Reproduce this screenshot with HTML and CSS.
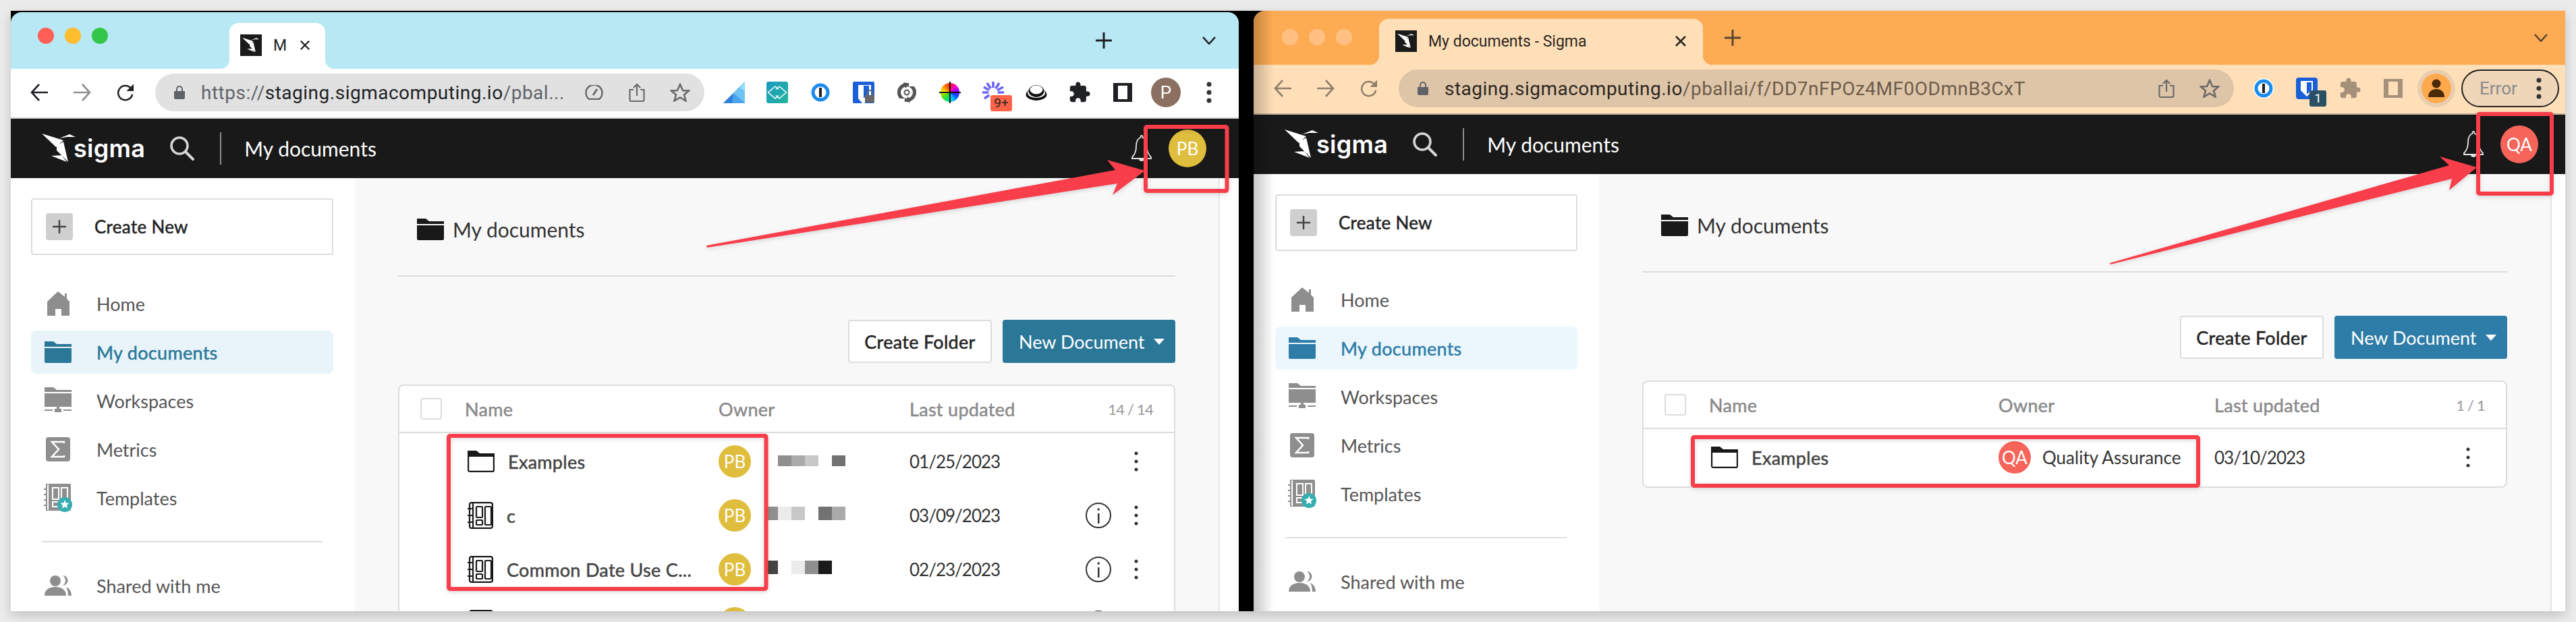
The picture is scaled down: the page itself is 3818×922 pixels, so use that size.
FILE: index.html
```html
<!DOCTYPE html>
<html lang="en">
<head>
<meta charset="utf-8">
<title>My documents - Sigma</title>
<link rel="stylesheet" href="styles.css">
</head>
<body>
<svg class="defs" aria-hidden="true">
  <defs>
    <linearGradient id="teal" x1="0" y1="0" x2="1" y2="1"><stop offset="0" stop-color="#1b9ac2"/><stop offset="1" stop-color="#22b69a"/></linearGradient>
    <symbol id="bird" viewBox="0 0 51 44"><path fill="currentColor" d="M0 0L32 10L21 20ZM22 18L32 12L39 42L22 25ZM14 33L29 32L37 42ZM26 7L41 1L50 5L37 5Z"/></symbol>
    <symbol id="search" viewBox="0 0 36 36"><circle cx="14" cy="14" r="12" fill="none" stroke="currentColor" stroke-width="3.5"/><path d="M23 23L34 34" stroke="currentColor" stroke-width="4" stroke-linecap="round"/></symbol>
    <symbol id="bell" viewBox="0 0 32 40"><path fill="none" stroke="currentColor" stroke-width="1.8" d="M16 1c-1 0-1.6 1-1.6 3C9 6 8 11 8 17c0 7-2 12-6 16v2h28v-2c-4-4-6-9-6-16 0-6-1-11-6.400-13 0-2-.6-3-1.600-3z"/><path fill="currentColor" d="M12 35h8c0 3-2 4-4 4s-4-1-4-4z"/></symbol>
    <symbol id="folder" viewBox="0 0 40 32"><path fill="currentColor" d="M0 0h13l5 4h22v4H0zM0 10h40v20a2 2 0 0 1-2 2H2a2 2 0 0 1-2-2z"/></symbol>
    <symbol id="folder-line" viewBox="0 0 40 32"><path fill="currentColor" d="M0 0h13l5 4h22v5H0z"/><path fill="none" stroke="currentColor" stroke-width="2.200" d="M1.100 6v22.900a2 2 0 0 0 2 2h33.800a2 2 0 0 0 2-2V6"/></symbol>
    <symbol id="home" viewBox="0 0 33 36"><path fill="currentColor" d="M16 0L0 15V36H12V26H21V36H33V15L29 11V3H26V8Z"/></symbol>
    <symbol id="workspace" viewBox="0 0 40 40"><path fill="currentColor" d="M0 0h13l5 4h22v3H0zM0 9h40v20H0zM18 29h4v3h3v5h-3v0h-4v0h-3v-5h3zM0 33h12v2H0zM28 33h12v2H28z"/></symbol>
    <symbol id="metrics" viewBox="0 0 36 36"><rect width="36" height="36" rx="4" fill="currentColor"/><path fill="none" stroke="#fff" stroke-width="2.500" d="M27 9V7H9l10 11L9 29h18v-2"/></symbol>
    <symbol id="templates" viewBox="0 0 42 42"><path fill="currentColor" d="M3 0h35a2 2 0 0 1 2 2v36a2 2 0 0 1-2 2H3z"/><path stroke="currentColor" stroke-width="2" d="M0 8h3M0 16h3M0 24h3M0 32h3"/><path fill="none" stroke="#fff" stroke-width="2" d="M6 1v38M13 6h9v17h-9zM13 27h9v7h-9zM26 6h9v28h-9z"/><circle cx="31" cy="31" r="11" fill="#35aeb0"/><polygon transform="translate(31 31)" fill="#fff" points="0,-7 1.800,-2.400 6.700,-2.200 2.900,.9 4.100,5.700 0,3 -4.100,5.700 -2.900,.9 -6.700,-2.200 -1.800,-2.400"/></symbol>
    <symbol id="shared" viewBox="0 0 40 30"><path fill="currentColor" d="M27 0a7.500 7.500 0 0 1 0 15c2.500-2 4-4.500 4-7.500S29.500 2 27 0zM32 17c5 2 8 7 8 13h-5c0-5-1-9-3-13z"/><circle cx="16" cy="8" r="8" fill="currentColor"/><path fill="currentColor" d="M0 30c0-8 6-13 16-13s16 5 16 13z"/></symbol>
    <symbol id="workbook" viewBox="0 0 38 40"><g fill="none" stroke="currentColor" stroke-width="2.200"><rect x="3" y="1.100" width="33.900" height="37.800" rx="3"/><path d="M8 1v38M0 10h7M0 20h7M0 30h7"/><rect x="13" y="7" width="9" height="16" rx="1"/><rect x="13" y="27" width="9" height="7" rx="1"/><rect x="26" y="7" width="9" height="27" rx="1"/></g></symbol>
    <symbol id="info" viewBox="0 0 38 40"><circle cx="19" cy="20" r="18" fill="none" stroke="currentColor" stroke-width="2"/><rect x="18" y="17" width="2.500" height="15" fill="currentColor"/><circle cx="19.200" cy="11" r="1.800" fill="currentColor"/></symbol>
    <symbol id="kebab" viewBox="0 0 8 32"><circle cx="4" cy="4" r="2.500" fill="currentColor"/><circle cx="4" cy="16" r="2.500" fill="currentColor"/><circle cx="4" cy="28" r="2.500" fill="currentColor"/></symbol>
    <symbol id="kebab-bold" viewBox="0 0 8 32"><circle cx="4" cy="4" r="3.500" fill="currentColor"/><circle cx="4" cy="16" r="3.500" fill="currentColor"/><circle cx="4" cy="28" r="3.500" fill="currentColor"/></symbol>
    <symbol id="back" viewBox="0 0 26 26"><path fill="none" stroke="currentColor" stroke-width="2.600" d="M26 13H2M13 1L2 13L13 25"/></symbol>
    <symbol id="forward" viewBox="0 0 26 26"><path fill="none" stroke="currentColor" stroke-width="2.600" d="M0 13H24M13 1L24 13L13 25"/></symbol>
    <symbol id="reload" viewBox="0 0 27 26"><path fill="none" stroke="currentColor" stroke-width="2.600" d="M22 7A11 11 0 1 0 24 16"/><path fill="currentColor" d="M26 0V11H15Z"/></symbol>
    <symbol id="lock" viewBox="0 0 16 20"><path fill="currentColor" d="M0 8h16v10a2 2 0 0 1-2 2H2a2 2 0 0 1-2-2z"/><path fill="none" stroke="currentColor" stroke-width="2" d="M4 9V5a4 4 0 0 1 8 0v4"/></symbol>
    <symbol id="gauge" viewBox="0 0 27 22"><path fill="none" stroke="currentColor" stroke-width="2.500" d="M6 21a12 12 0 1 1 15 0z"/><path stroke="currentColor" stroke-width="3" d="M12 15L18 6"/></symbol>
    <symbol id="share" viewBox="0 0 24 28"><path fill="none" stroke="currentColor" stroke-width="2.200" d="M7 10H1.500v15a2 2 0 0 0 2 2h17a2 2 0 0 0 2-2V10H17M12 19V2M7 7l5-5 5 5"/></symbol>
    <symbol id="star" viewBox="0 0 30 28"><polygon fill="none" stroke="currentColor" stroke-width="2.600" points="15,2 19,11 28,11.500 21,17.500 23.500,26.500 15,21.500 6.500,26.500 9,17.500 2,11.500 11,11"/></symbol>
    <symbol id="close" viewBox="0 0 18 18"><path fill="none" stroke="currentColor" stroke-width="2.600" d="M2 2l14 14M16 2L2 16"/></symbol>
    <symbol id="plus" viewBox="0 0 24 24"><path fill="none" stroke="currentColor" stroke-width="3" stroke-linecap="round" d="M12 1v22M1 12h22"/></symbol>
    <symbol id="chevron" viewBox="0 0 20 12"><path fill="none" stroke="currentColor" stroke-width="2.600" d="M1 1l9 10 9-10"/></symbol>
    <symbol id="onepass" viewBox="0 0 30 30"><circle cx="15" cy="15" r="15" fill="#fff"/><circle cx="15" cy="15" r="11" fill="none" stroke="#1a8cf0" stroke-width="5"/><rect x="13" y="8" width="4" height="14" fill="#222"/></symbol>
    <symbol id="puzzle" viewBox="0 0 24 24"><path fill="currentColor" d="M20.500 11H19V7c0-1.100-.9-2-2-2h-4V3.500C13 2.120 11.880 1 10.500 1S8 2.120 8 3.500V5H4c-1.100 0-1.990.9-1.990 2v3.800H3.500c1.490 0 2.700 1.210 2.700 2.700s-1.210 2.700-2.700 2.700H2V20c0 1.100.9 2 2 2h3.800v-1.500c0-1.490 1.210-2.700 2.700-2.700 1.490 0 2.700 1.210 2.700 2.700V22H17c1.100 0 2-.9 2-2v-4h1.500c1.380 0 2.500-1.120 2.500-2.500S21.880 11 20.500 11z"/></symbol>
    <symbol id="panel" viewBox="0 0 28 28"><path fill="currentColor" fill-rule="evenodd" d="M0 0h28v28H0zM7 4v20h14V4z"/></symbol>
    <symbol id="shield" viewBox="0 0 32 32"><rect width="32" height="32" rx="2" fill="#1a5fd8"/><path fill="#fff" d="M8 5h19v15l-10 12H14L8 25zM16 7v17l6-3V7z"/><path fill="#1a5fd8" d="M16 6h8v15l-8 3z"/><rect x="18" y="20" width="14" height="11" rx="1.500" fill="#666"/><path fill="none" stroke="#666" stroke-width="2" d="M21 20v-3a4 4 0 0 1 8 0v3"/></symbol>
  </defs>
</svg>

<main class="desktop">
  <section class="window win-a">
    <header class="tabbar">
      <div class="lights"><i class="light red"></i><i class="light amber"></i><i class="light green"></i></div>
      <div class="tab">
        <span class="favicon"><svg class="ico-fav"><use href="#bird"/></svg></span>
        <span class="tab-title">M</span>
        <svg class="ico-close"><use href="#close"/></svg>
      </div>
      <svg class="ico-plus"><use href="#plus"/></svg>
      <svg class="ico-chev"><use href="#chevron"/></svg>
    </header>
    <nav class="toolbar">
      <span class="tool"><svg class="ico-nav"><use href="#back"/></svg></span>
      <span class="tool dim"><svg class="ico-nav"><use href="#forward"/></svg></span>
      <span class="tool"><svg class="ico-nav"><use href="#reload"/></svg></span>
      <div class="pill">
        <svg class="ico-lock"><use href="#lock"/></svg>
        <span class="url"><span class="url-dim">https://</span>staging.sigmacomputing.io<span class="url-dim">/pbal...</span></span>
        <div class="pill-actions">
          <span class="tool"><svg class="ico-gauge"><use href="#gauge"/></svg></span>
          <span class="tool"><svg class="ico-share"><use href="#share"/></svg></span>
          <span class="tool"><svg class="ico-star"><use href="#star"/></svg></span>
        </div>
      </div>
      <div class="extensions">
        <span class="tool"><svg class="ico-32" viewBox="0 0 32 32"><polygon points="32,0 32,32 0,32" fill="#3b8fe6"/><polygon points="32,0 32,15 24,9" fill="#8fe0fb"/><polygon points="32,15 24,9 15,17 32,32" fill="#6fc4f5"/><polygon points="15,17 0,32 13,32" fill="#2f7fdc"/><polygon points="15,17 13,32 32,32" fill="#4ea4ec"/></svg></span>
        <span class="tool"><svg class="ico-32" viewBox="0 0 32 32"><rect width="32" height="32" rx="3" fill="url(#teal)"/><path fill="none" stroke="#fff" stroke-width="1.500" d="M13 7L2.500 16 13 25l5-4.500M19 7L29.500 16 19 25l-5-4.500M18 11.500L13 7M14 11.500L19 7"/></svg></span>
        <span class="tool"><svg class="ico-30"><use href="#onepass"/></svg></span>
        <span class="tool"><svg class="ico-32"><use href="#shield"/></svg></span>
        <span class="tool"><svg class="ico-32" viewBox="0 0 32 32"><circle cx="16" cy="16" r="11.500" fill="none" stroke="#555" stroke-width="5"/><circle cx="16" cy="16" r="3.500" fill="none" stroke="#555" stroke-width="2"/><path fill="#fff" d="M19 0h8v7h-8zM5 25h8v7H5z"/><path fill="#555" d="M11 1l9 2-6 7zM21 31l-9-2 6-7z"/></svg></span>
        <span class="tool"><span class="wheel"></span></span>
        <span class="tool"><span class="burst"><svg class="ico-32" viewBox="0 0 32 32"><g stroke="#6a63f6" stroke-width="3.600"><path d="M16 16V0M16 16L7 2M16 16L25 2M16 16L2 8M16 16L31 8M16 16H0M16 16H32M16 16L3 25"/></g><circle cx="16" cy="16" r="7" fill="#fff"/></svg><span class="badge-orange">9+</span></span></span>
        <span class="tool"><svg class="ico-32" viewBox="0 0 32 24"><ellipse cx="16" cy="15" rx="15.500" ry="9" fill="#111"/><ellipse cx="16" cy="13" rx="13" ry="7" fill="#fff"/><ellipse cx="16" cy="10" rx="11.500" ry="9" fill="#111"/><ellipse cx="16" cy="8" rx="9.500" ry="6.500" fill="#fff"/></svg></span>
        <span class="tool"><svg class="ico-puzzle"><use href="#puzzle"/></svg></span>
        <span class="tool"><svg class="ico-panel"><use href="#panel"/></svg></span>
        <span class="tool"><span class="chrome-avatar">P</span></span>
        <span class="tool"><svg class="ico-kebab-b"><use href="#kebab-bold"/></svg></span>
      </div>
    </nav>
    <header class="appbar">
      <svg class="ico-logo"><use href="#bird"/></svg>
      <span class="wordmark">sigma</span>
      <svg class="ico-search"><use href="#search"/></svg>
      <i class="app-divider"></i>
      <span class="app-title">My documents</span>
      <div class="app-right">
        <svg class="ico-bell"><use href="#bell"/></svg>
        <span class="avatar avatar-lg gold">PB</span>
      </div>
    </header>
    <div class="content">
      <aside class="sidebar">
        <button class="create-new"><span class="plus-box"><svg class="ico-plus-sm"><use href="#plus"/></svg></span>Create New</button>
        <ul class="nav">
          <li class="nav-item"><span class="nav-icon"><svg class="i-home"><use href="#home"/></svg></span>Home</li>
          <li class="nav-item active"><span class="nav-icon"><svg class="i-folder"><use href="#folder"/></svg></span>My documents</li>
          <li class="nav-item"><span class="nav-icon"><svg class="i-work"><use href="#workspace"/></svg></span>Workspaces</li>
          <li class="nav-item"><span class="nav-icon"><svg class="i-metrics"><use href="#metrics"/></svg></span>Metrics</li>
          <li class="nav-item"><span class="nav-icon"><svg class="i-templates"><use href="#templates"/></svg></span>Templates</li>
        </ul>
        <hr class="side-rule">
        <div class="nav-item"><span class="nav-icon"><svg class="i-shared"><use href="#shared"/></svg></span>Shared with me</div>
      </aside>
      <div class="main">
        <h1 class="page-title"><svg class="i-folder"><use href="#folder"/></svg>My documents</h1>
        <hr class="page-rule">
        <div class="actions">
          <button class="btn btn-plain">Create Folder</button>
          <button class="btn btn-primary">New Document<i class="caret"></i></button>
        </div>
        <div class="table">
          <div class="thead">
            <div class="th-name"><i class="checkbox"></i>Name</div>
            <div>Owner</div>
            <div>Last updated</div>
            <div class="count">14 / 14</div>
          </div>
          <div class="tbody">
            <div class="row">
              <div class="cell-name"><svg class="i-rowfolder"><use href="#folder-line"/></svg>Examples</div>
              <div class="cell-owner"><span class="avatar gold">PB</span><span class="redacted short"><i class="s0"></i><i class="s3"></i><i class="s4"></i><i class="s5"></i><i class="s0"></i><i class="s2"></i></span></div>
              <div class="cell-date">01/25/2023</div>
              <div class="cell-act"><svg class="i-kebab"><use href="#kebab"/></svg></div>
            </div>
            <div class="row">
              <div class="cell-name"><svg class="i-workbook"><use href="#workbook"/></svg>c</div>
              <div class="cell-owner"><span class="avatar gold">PB</span><span class="redacted"><i class="s3"></i><i class="s6"></i><i class="s5"></i><i class="s0"></i><i class="s2"></i><i class="s4"></i></span></div>
              <div class="cell-date">03/09/2023</div>
              <div class="cell-act"><svg class="i-info"><use href="#info"/></svg><svg class="i-kebab"><use href="#kebab"/></svg></div>
            </div>
            <div class="row">
              <div class="cell-name"><svg class="i-workbook"><use href="#workbook"/></svg>Common Date Use C...</div>
              <div class="cell-owner"><span class="avatar gold">PB</span><span class="redacted"><i class="s1"></i><i class="s0"></i><i class="s6"></i><i class="s3"></i><i class="s7"></i><i class="s0"></i></span></div>
              <div class="cell-date">02/23/2023</div>
              <div class="cell-act"><svg class="i-info"><use href="#info"/></svg><svg class="i-kebab"><use href="#kebab"/></svg></div>
            </div>
            <div class="row">
              <div class="cell-name"><svg class="i-workbook"><use href="#workbook"/></svg></div>
              <div class="cell-owner"><span class="avatar gold"></span></div>
              <div class="cell-date"></div>
              <div class="cell-act"><svg class="i-info"><use href="#info"/></svg><svg class="i-kebab"><use href="#kebab"/></svg></div>
            </div>
          </div>
        </div>
      </div>
      <div class="gutter-strip"></div>
    </div>
  </section>

  <section class="window win-b">
    <header class="tabbar">
      <div class="lights"><i class="light pale"></i><i class="light pale"></i><i class="light pale"></i></div>
      <div class="tab">
        <span class="favicon"><svg class="ico-fav"><use href="#bird"/></svg></span>
        <span class="tab-title">My documents - Sigma</span>
        <svg class="ico-close"><use href="#close"/></svg>
      </div>
      <svg class="ico-plus"><use href="#plus"/></svg>
      <svg class="ico-chev"><use href="#chevron"/></svg>
    </header>
    <nav class="toolbar">
      <span class="tool dim"><svg class="ico-nav"><use href="#back"/></svg></span>
      <span class="tool dim"><svg class="ico-nav"><use href="#forward"/></svg></span>
      <span class="tool dim"><svg class="ico-nav"><use href="#reload"/></svg></span>
      <div class="pill">
        <svg class="ico-lock"><use href="#lock"/></svg>
        <span class="url">staging.sigmacomputing.io<span class="url-dim">/pballai/f/DD7nFPOz4MF0ODmnB3CxT</span></span>
        <div class="pill-actions">
          <span class="tool"><svg class="ico-share"><use href="#share"/></svg></span>
          <span class="tool"><svg class="ico-star"><use href="#star"/></svg></span>
        </div>
      </div>
      <div class="extensions">
        <span class="tool"><svg class="ico-30"><use href="#onepass"/></svg></span>
        <span class="tool"><span class="bitwarden"><svg class="ico-bw" viewBox="0 0 32 32"><rect width="32" height="32" rx="4" fill="#1a5fd8"/><path fill="#fff" d="M7 5h18v14l-9 9-9-9z"/><path fill="#1a5fd8" d="M16 7h7v11l-7 7z"/></svg><span class="badge-slate">1</span></span></span>
        <span class="tool faded"><svg class="ico-puzzle"><use href="#puzzle"/></svg></span>
        <span class="tool faded"><svg class="ico-panel"><use href="#panel"/></svg></span>
        <span class="tool"><span class="guest"><svg class="ico-guest" viewBox="0 0 44 44"><circle cx="22" cy="22" r="22" fill="#ffa94d"/><circle cx="22" cy="15" r="6.500" fill="#4a2a08"/><path fill="#4a2a08" d="M10 35c0-8 5-12 12-12s12 4 12 12z"/></svg></span></span>
        <span class="error-pill">Error<svg class="ico-kebab-b"><use href="#kebab-bold"/></svg></span>
      </div>
    </nav>
    <header class="appbar">
      <svg class="ico-logo"><use href="#bird"/></svg>
      <span class="wordmark">sigma</span>
      <svg class="ico-search"><use href="#search"/></svg>
      <i class="app-divider"></i>
      <span class="app-title">My documents</span>
      <div class="app-right">
        <svg class="ico-bell"><use href="#bell"/></svg>
        <span class="avatar avatar-lg coral">QA</span>
      </div>
    </header>
    <div class="content">
      <aside class="sidebar">
        <button class="create-new"><span class="plus-box"><svg class="ico-plus-sm"><use href="#plus"/></svg></span>Create New</button>
        <ul class="nav">
          <li class="nav-item"><span class="nav-icon"><svg class="i-home"><use href="#home"/></svg></span>Home</li>
          <li class="nav-item active"><span class="nav-icon"><svg class="i-folder"><use href="#folder"/></svg></span>My documents</li>
          <li class="nav-item"><span class="nav-icon"><svg class="i-work"><use href="#workspace"/></svg></span>Workspaces</li>
          <li class="nav-item"><span class="nav-icon"><svg class="i-metrics"><use href="#metrics"/></svg></span>Metrics</li>
          <li class="nav-item"><span class="nav-icon"><svg class="i-templates"><use href="#templates"/></svg></span>Templates</li>
        </ul>
        <hr class="side-rule">
        <div class="nav-item"><span class="nav-icon"><svg class="i-shared"><use href="#shared"/></svg></span>Shared with me</div>
      </aside>
      <div class="main">
        <h1 class="page-title"><svg class="i-folder"><use href="#folder"/></svg>My documents</h1>
        <hr class="page-rule">
        <div class="actions">
          <button class="btn btn-plain">Create Folder</button>
          <button class="btn btn-primary">New Document<i class="caret"></i></button>
        </div>
        <div class="table">
          <div class="thead">
            <div class="th-name"><i class="checkbox"></i>Name</div>
            <div>Owner</div>
            <div>Last updated</div>
            <div class="count">1 / 1</div>
          </div>
          <div class="tbody">
            <div class="row">
              <div class="cell-name"><svg class="i-rowfolder"><use href="#folder-line"/></svg>Examples</div>
              <div class="cell-owner"><span class="avatar coral">QA</span><span class="owner-name">Quality Assurance</span></div>
              <div class="cell-date">03/10/2023</div>
              <div class="cell-act"><svg class="i-kebab"><use href="#kebab"/></svg></div>
            </div>
          </div>
        </div>
      </div>
      <div class="gutter-strip"></div>
    </div>
  </section>
</main>

<svg class="annotations" viewBox="0 0 3818 922" aria-hidden="true">
  <g class="marks">
    <rect x="1698" y="188" width="120.500" height="95" rx="2"/>
    <rect x="665" y="646" width="470.500" height="227" rx="2"/>
    <rect x="3673" y="169" width="109" height="118" rx="2"/>
    <rect x="2509" y="648" width="749" height="72" rx="2"/>
  </g>
  <polygon class="arrow" points="1047,364 1653,252 1641,237 1697,253 1649,289 1656,272 1048,367"/>
  <polygon class="arrow" points="3127,390 3630,245 3616,232 3671,248 3630,282 3634,265 3128,392"/>
</svg>
</body>
</html>
```
FILE: styles.css
```css
* { box-sizing: border-box; }

html, body { margin: 0; height: 100%; }

body {
  width: 3818px;
  height: 922px;
  padding: 16px 0 0 16px;
  overflow: hidden;
  background: #ebebeb;
  font-family: Lato, "Open Sans", sans-serif;
  font-size: 27px;
  color: #333;
}

i { display: block; font-style: normal; }
svg { display: block; flex: none; }

.defs { position: absolute; width: 0; height: 0; }

.desktop {
  display: flex;
  gap: 22px;
  width: 3786px;
  height: 890px;
  background: #000;
  box-shadow: 0 6px 16px rgba(0, 0, 0, .18);
}

.window {
  position: relative;
  display: flex;
  flex-direction: column;
  overflow: hidden;
}

.win-a {
  --tabbar-bg: #b8e8f4;
  --tab-bg: #fff;
  --toolbar-line: #d2d2d2;
  --pill-bg: #e1e1e1;
  --ink: #202124;
  --ink-dim: #5f6368;
  --accent: #2b7798;
  --accent-soft: #e8f4f9;
  --lights-left: 40px;
  --tab-gap: 180px;
  --name-col: 473px;
  --owner-col: 283px;
  --sidebar-w: 510px;
  --sidebar-pad: 30px;
  --strip-w: 28px;
  --tabbar-h: 84px;
  width: 1820px;
  margin-top: 2px;
  border-radius: 16px 16px 0 0;
}

.win-b {
  --tabbar-bg: #feac54;
  --tab-bg: #ffdfb8;
  --toolbar-line: #c8b59e;
  --pill-bg: #dfc5a7;
  --ink: #2a2621;
  --ink-dim: #6b5c4d;
  --accent: #2e7da8;
  --accent-soft: #ecf7fd;
  --lights-left: 42px;
  --tab-gap: 40px;
  --name-col: 526px;
  --owner-col: 320px;
  --sidebar-w: 512px;
  --sidebar-pad: 32px;
  --strip-w: 20px;
  --tabbar-h: 80px;
  width: 1944px;
  border-radius: 16px 0 0 0;
}

/* soft shadow the left window throws on the right one */
.win-b::after {
  content: "";
  position: absolute;
  inset: 0 auto 0 0;
  width: 30px;
  background: linear-gradient(90deg, rgba(0, 0, 0, .22), rgba(0, 0, 0, 0));
}

/* ---------- tab strip ---------- */
.tabbar {
  display: flex;
  align-items: center;
  flex: none;
  height: var(--tabbar-h);
  padding-left: var(--lights-left);
  background: var(--tabbar-bg);
}

.lights { display: flex; gap: 16px; margin-bottom: 14px; }
.win-b .lights { margin-bottom: 2px; margin-left: 0; }
.light { width: 24px; height: 24px; border-radius: 50%; }
.red { background: #ff5f57; }
.amber { background: #febc2e; }
.green { background: #32c748; }
.pale { background: #ffc082; }

.tab {
  position: relative;
  display: flex;
  align-items: center;
  align-self: flex-end;
  width: 142px;
  height: 68px;
  margin-left: var(--tab-gap);
  padding: 0 16px 2px;
  border-radius: 14px 14px 0 0;
  background: var(--tab-bg);
  font: 400 23px Roboto, sans-serif;
  color: var(--ink);
}

.win-b .tab { width: 480px; padding: 0 24px 2px; }

.tab::before,
.tab::after {
  content: "";
  position: absolute;
  bottom: 0;
  width: 14px;
  height: 14px;
}
.tab::before { left: -14px; background: radial-gradient(circle at 0 0, transparent 14px, var(--tab-bg) 14.500px); }
.tab::after { right: -14px; background: radial-gradient(circle at 100% 0, transparent 14px, var(--tab-bg) 14.500px); }

.favicon {
  display: flex;
  align-items: center;
  justify-content: center;
  width: 32px;
  height: 32px;
  background: #1a1a1a;
  color: #fff;
}
.ico-fav { width: 26px; height: 26px; }

.tab-title { margin-left: 17px; white-space: nowrap; }
.ico-close { width: 16px; height: 16px; margin-left: 19px; }
.win-b .ico-close { width: 18px; height: 18px; margin-left: auto; }

.ico-plus { width: 24px; height: 24px; margin-left: 1142px; color: #202124; }
.win-b .ico-plus { margin-left: 32px; color: #5a4630; }
.ico-chev { width: 20px; height: 12px; margin-left: 134px; color: #202124; }
.win-b .ico-chev { margin-left: 1176px; color: #5a4630; }

/* ---------- toolbar ---------- */
.toolbar {
  display: flex;
  align-items: center;
  flex: none;
  height: 74px;
  padding: 0 0 2px 10px;
  border-bottom: 2px solid var(--toolbar-line);
  background: var(--tab-bg);
  color: var(--ink);
}
.win-b .toolbar { padding-left: 11px; }

.tool {
  display: flex;
  align-items: center;
  justify-content: center;
  flex: none;
  width: 64px;
  height: 56px;
  color: var(--ink);
}
.tool.dim { color: #8e8e8e; }
.win-b .tool.dim { color: #8f7e6c; }
.tool.faded { color: #a5917a; }

.ico-nav { width: 26px; height: 26px; }

.pill {
  display: flex;
  align-items: center;
  flex: none;
  width: 814px;
  height: 56px;
  margin-left: 12px;
  padding: 0 4px 0 28px;
  border-radius: 28px;
  background: var(--pill-bg);
}
.win-b .pill { width: 1238px; }

.ico-lock { width: 16px; height: 20px; color: #5f6368; }
.url { margin-left: 24px; font: 400 28px Roboto, sans-serif; letter-spacing: .5px; color: var(--ink); white-space: nowrap; }
.url-dim { color: var(--ink-dim); }

.pill-actions { display: flex; margin-left: auto; }
.pill-actions .tool { color: #6a6a6a; }
.ico-gauge { width: 27px; height: 22px; }
.ico-share { width: 24px; height: 28px; }
.ico-star { width: 30px; height: 28px; }

.extensions { display: flex; align-items: center; margin-left: 12px; }
.ico-32 { width: 32px; height: 32px; }
.ico-30 { width: 30px; height: 30px; }
.ico-puzzle { width: 34px; height: 34px; }
.ico-panel { width: 28px; height: 28px; }
.ico-kebab-b { width: 8px; height: 32px; color: #333; }

.wheel {
  position: relative;
  width: 28px;
  height: 28px;
  border-radius: 50%;
  background: conic-gradient(#ff2020, #ff00c8, #8a00ff, #0050ff, #00c8ff, #00e070, #60e000, #ffe000, #ff8000, #ff2020);
}
.wheel::before { content: ""; position: absolute; left: 13px; top: -2px; width: 2px; height: 32px; background: #111; }
.wheel::after { content: ""; position: absolute; left: -2px; top: 13px; width: 32px; height: 2px; background: #111; }

.burst { position: relative; display: block; width: 32px; height: 32px; }
.badge-orange {
  position: absolute;
  left: 12px;
  top: 20px;
  width: 32px;
  height: 24px;
  border-radius: 3px;
  background: #ff6347;
  font: 400 19px/24px Roboto, sans-serif;
  text-align: center;
  color: #222;
}

.chrome-avatar {
  width: 44px;
  height: 44px;
  border-radius: 50%;
  background: #8b6f60;
  font: 400 26px/44px Roboto, sans-serif;
  text-align: center;
  color: #fff;
}

.bitwarden { position: relative; display: block; width: 32px; height: 32px; }
.ico-bw { width: 32px; height: 32px; }
.badge-slate {
  position: absolute;
  left: 20px;
  top: 19px;
  width: 25px;
  height: 24px;
  border-radius: 3px;
  background: #2a4f63;
  font: 400 19px/24px Roboto, sans-serif;
  text-align: center;
  color: #fff;
}

.guest {
  display: flex;
  align-items: center;
  justify-content: center;
  width: 56px;
  height: 56px;
  border-radius: 50%;
  background: #e8cdae;
}
.ico-guest { width: 44px; height: 44px; }

.error-pill {
  display: flex;
  align-items: center;
  justify-content: space-between;
  flex: none;
  width: 145px;
  height: 56px;
  margin-left: 5px;
  padding: 0 24px 0 25px;
  border: 2px solid #222;
  border-radius: 28px;
  background: #efd6b8;
  font: 400 26px Roboto, sans-serif;
  color: #8a8a8a;
}

/* ---------- app header ---------- */
.appbar {
  display: flex;
  align-items: center;
  flex: none;
  height: 88px;
  padding: 0 48px 0 46px;
  background: #191919;
  color: #fff;
}
.win-b .appbar { padding: 0 40px 0 46px; }

.ico-logo { width: 51px; height: 44px; margin-right: -4px; color: #fff; }
.wordmark { font: 600 36px Inter, sans-serif; color: #fff; letter-spacing: .3px; }
.ico-search { width: 36px; height: 36px; margin-left: 37px; color: #d6d6d6; }
.app-divider { width: 2px; height: 48px; margin-left: 38px; background: #8e8e8e; }
.app-title { margin-left: 34px; font-size: 30px; }
.app-right { display: flex; align-items: center; gap: 24px; margin-left: auto; }
.ico-bell { width: 32px; height: 40px; color: #e6e6e6; }

.avatar {
  display: flex;
  align-items: center;
  justify-content: center;
  flex: none;
  width: 48px;
  height: 48px;
  border-radius: 50%;
  font-size: 26px;
  color: #fff;
}
.avatar-lg { width: 56px; height: 56px; }
.gold { background: #dfbd3d; }
.coral { background: #f6645a; }

/* ---------- page body ---------- */
.content { display: flex; flex: 1; min-height: 0; background: #fff; }

.sidebar {
  flex: none;
  width: var(--sidebar-w);
  padding: 30px var(--sidebar-pad) 0;
  background: #fff;
}

/* semibold look: the installed Lato only has regular and bold */
.create-new,
.btn-plain,
.nav-item.active,
.thead,
.cell-name {
  font-weight: 400;
  letter-spacing: .3px;
  -webkit-text-stroke: .5px currentColor;
}

.create-new {
  display: flex;
  align-items: center;
  gap: 32px;
  width: 448px;
  height: 84px;
  padding: 0 0 0 20px;
  border: 2px solid #ddd;
  border-radius: 4px;
  background: #fff;
  font-family: Lato, sans-serif;
  font-size: 26px;
  color: #222;
}

.plus-box {
  display: flex;
  align-items: center;
  justify-content: center;
  width: 40px;
  height: 40px;
  border-radius: 4px;
  background: #cfcfcf;
  color: #444;
}
.ico-plus-sm { width: 20px; height: 20px; }

.nav { display: flex; flex-direction: column; gap: 8px; margin: 40px 0 0; padding: 0; list-style: none; }

.nav-item {
  display: flex;
  align-items: center;
  width: 448px;
  height: 64px;
  padding-left: 20px;
  border-radius: 8px;
  color: #555;
}
.nav-item.active { background: var(--accent-soft); color: var(--accent); }
.nav-icon { display: flex; justify-content: center; flex: none; width: 40px; margin-right: 37px; color: #8e8e8e; -webkit-text-stroke: 0; }
.active .nav-icon { color: var(--accent); }

.i-home { width: 33px; height: 36px; }
.i-folder { width: 40px; height: 32px; }
.i-work { width: 40px; height: 40px; }
.i-metrics { width: 36px; height: 36px; }
.i-templates { width: 42px; height: 42px; }
.i-shared { width: 40px; height: 30px; }

.side-rule { width: 416px; height: 2px; margin: 32px 0 32px 16px; border: 0; background: #ddd; }

.main {
  flex: 1;
  min-width: 0;
  padding: 60px 64px 0;
  border-right: 2px solid #e6e6e6;
  background: #f8f8f8;
  overflow: hidden;
}

.gutter-strip { flex: none; width: var(--strip-w); background: #fff; }

.page-title {
  display: flex;
  align-items: center;
  gap: 13px;
  height: 32px;
  margin: 0 0 0 28px;
  font-size: 30px;
  font-weight: 400;
  color: #333;
}
.page-title .i-folder { color: #191919; }

.page-rule { height: 2px; margin: 52px 0 64px; border: 0; background: #ddd; }

.actions { display: flex; justify-content: flex-end; gap: 16px; }

.btn {
  display: flex;
  align-items: center;
  height: 64px;
  border-radius: 4px;
  font-family: Lato, sans-serif;
  font-size: 27px;
}
.btn-plain { justify-content: center; width: 213px; padding: 0; border: 2px solid #ddd; background: #fff; color: #222; }
.btn-primary { gap: 13px; width: 256px; padding: 0 0 0 24px; border: 0; background: var(--accent); color: #fff; font-weight: 400; }
.caret { width: 0; height: 0; border-left: 8px solid transparent; border-right: 8px solid transparent; border-top: 9px solid #fff; }

.table {
  margin-top: 32px;
  border: 2px solid #ddd;
  border-radius: 8px;
  background: #fff;
}

.thead, .row {
  display: grid;
  grid-template-columns: var(--name-col) var(--owner-col) 200px 1fr;
  align-items: center;
}

.thead {
  height: 70px;
  border-bottom: 2px solid #ddd;
  color: #8a8a8a;
}

.th-name { display: flex; align-items: center; gap: 34px; padding-left: 31px; }
.checkbox { width: 32px; height: 32px; border: 2px solid #ddd; border-radius: 4px; background: #fff; }

.count {
  padding-right: 31px;
  text-align: right;
  font-size: 22px;
  letter-spacing: -.8px;
  -webkit-text-stroke: 0;
  color: #999;
}

.tbody { padding: 2px 0 3px; }
.row { height: 80px; }

.cell-name { display: flex; align-items: center; gap: 20px; padding-left: 101px; color: #444; white-space: nowrap; }
.win-b .cell-name { padding-left: 100px; }
.i-rowfolder { width: 40px; height: 32px; color: #191919; }
.i-workbook { width: 38px; height: 40px; color: #191919; }

.cell-owner { display: flex; align-items: center; gap: 20px; }
.owner-name { margin-left: -3px; font-size: 26px; color: #333; white-space: nowrap; }

.redacted { display: flex; margin-bottom: 6px; }
.redacted i { width: 20px; height: 20px; }
.redacted.short { margin-bottom: 2px; }
.redacted.short i { height: 16px; }
.s0 { background: #fff; }
.s1 { background: #444; }
.s2 { background: #727272; }
.s3 { background: #8f8f8f; }
.s4 { background: #aaa; }
.s5 { background: #c8c8c8; }
.s6 { background: #ebebeb; }
.s7 { background: #1a1a1a; }

.cell-date { font-size: 26px; letter-spacing: -1px; color: #333; }

.cell-act { display: flex; align-items: center; justify-content: flex-end; padding-right: 52px; color: #333; }
.i-info { width: 38px; height: 40px; margin-right: 33px; }
.i-kebab { width: 8px; height: 32px; }

/* ---------- screenshot annotations ---------- */
.annotations {
  position: absolute;
  left: 0;
  top: 0;
  width: 3818px;
  height: 922px;
  pointer-events: none;
  filter: drop-shadow(0 2px 3px rgba(0, 0, 0, .15));
}
.marks rect { fill: none; stroke: #f93e4b; stroke-width: 6; }
.arrow { fill: #f93e4b; }
```
